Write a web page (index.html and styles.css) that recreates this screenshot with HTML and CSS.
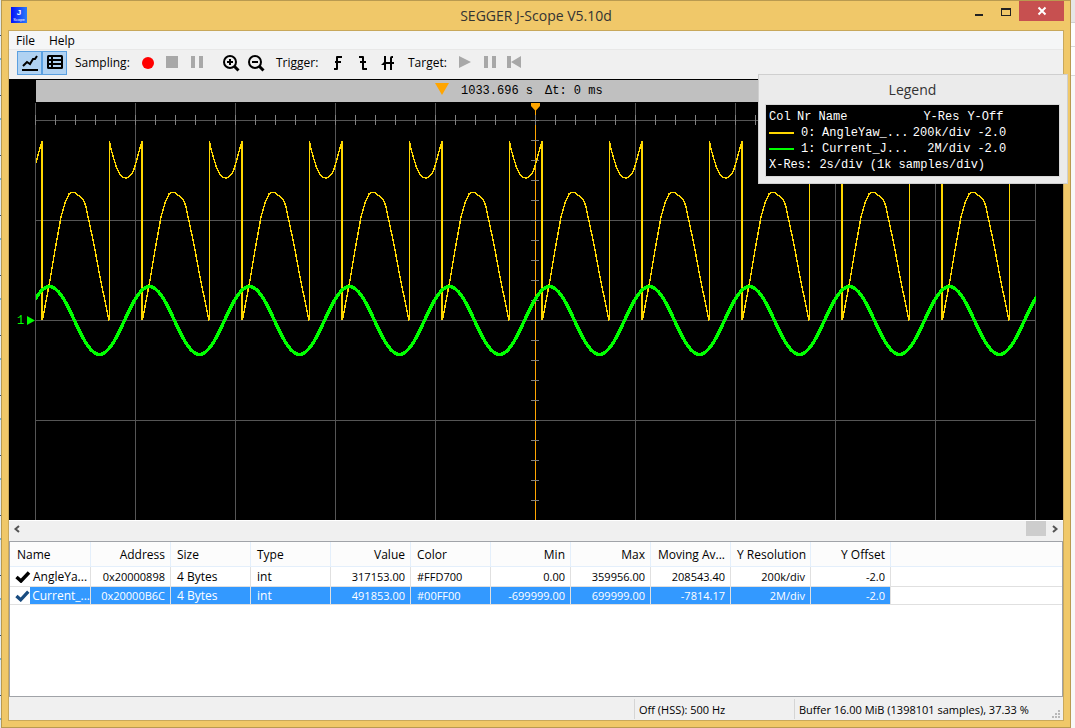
FILE: index.html
```html
<!DOCTYPE html>
<html lang="en">
<head>
<meta charset="utf-8">
<title>SEGGER J-Scope V5.10d</title>
<link rel="stylesheet" href="styles.css">
</head>
<body>
<div class="window">
  <header class="titlebar">
    <svg class="app-icon" width="16" height="16" viewBox="0 0 16 16" aria-hidden="true">
      <defs><linearGradient id="blue"><stop offset="0" stop-color="#0410f8"/><stop offset="1" stop-color="#2d7cf8"/></linearGradient></defs>
      <rect width="16" height="16" fill="url(#blue)"/>
      <text x="8" y="8" class="app-letter">J</text>
      <text x="8" y="14" class="app-word">Scope</text>
    </svg>
    <h1 class="title">SEGGER J-Scope V5.10d</h1>
    <div class="window-buttons">
      <button class="wbtn" aria-label="Minimize"><svg width="10" height="12" viewBox="0 0 10 12"><path fill="#222" d="M1 8h8v2H1z"/></svg></button>
      <button class="wbtn" aria-label="Maximize"><svg width="10" height="12" viewBox="0 0 10 12" shape-rendering="crispEdges"><path fill="#222" fill-rule="evenodd" d="M0 2h10v8H0zM1 4v5h8V4z"/></svg></button>
      <button class="wbtn close" aria-label="Close"><svg width="10" height="10" viewBox="0 0 10 10"><path stroke="#fff" stroke-width="2" d="M1.500 1.500l7 7M8.500 1.500l-7 7"/></svg></button>
    </div>
  </header>

  <div class="client">
    <nav class="menu"><button>File</button><button>Help</button></nav>

    <div class="toolbar">
      <button class="tool on" aria-label="Show graph" aria-pressed="true"><svg width="24" height="22" viewBox="0 0 24 22"><path d="M5 14l4-4 3 2 3-5 2 0 2-3" fill="none" stroke="#000" stroke-width="2"/><path d="M4 17h16v2H4z"/></svg></button>
      <button class="tool on" aria-label="Show table" aria-pressed="true"><svg width="24" height="22" viewBox="0 0 24 22"><rect x="4" y="3" width="16" height="14" rx="1.500"/><path fill="#b0d2f2" d="M6 5h2v2H6zM10 5h8v2h-8zM6 9h2v2H6zM10 9h8v2h-8zM6 13h2v2H6zM10 13h8v2h-8z"/></svg></button>
      <span class="label sampling">Sampling:</span>
      <button class="tool" aria-label="Record"><svg width="24" height="22" viewBox="0 0 24 22"><circle cx="12" cy="11" r="6" fill="red"/></svg></button>
      <button class="tool" aria-label="Stop"><svg width="24" height="22" viewBox="0 0 24 22"><path fill="#a8a8a8" d="M5 4h12v12H5z"/></svg></button>
      <button class="tool" aria-label="Pause"><svg width="24" height="22" viewBox="0 0 24 22"><path fill="#a8a8a8" d="M5 4h4v12H5zM13 4h4v12h-4z"/></svg></button>
      <button class="tool zoom" aria-label="Zoom in"><svg width="24" height="22" viewBox="0 0 24 22"><circle cx="11" cy="10" r="6" fill="none" stroke="#000" stroke-width="2"/><path d="M8 9h2V7h2v2h2v2h-2v2h-2v-2H8z"/><path d="M15 14l4.500 4.500" stroke="#000" stroke-width="3"/></svg></button>
      <button class="tool" aria-label="Zoom out"><svg width="24" height="22" viewBox="0 0 24 22"><circle cx="11" cy="10" r="6" fill="none" stroke="#000" stroke-width="2"/><path d="M8 9h6v2H8z"/><path d="M15 14l4.500 4.500" stroke="#000" stroke-width="3"/></svg></button>
      <span class="label trigger">Trigger:</span>
      <button class="tool" aria-label="Rising edge"><svg width="24" height="22" viewBox="0 0 24 22"><path d="M8 16h2v-5H9V9h1V5q0-1 1-1h5v2h-4v3h3v2h-3v6q0 1-1 1H8z"/></svg></button>
      <button class="tool" aria-label="Falling edge"><svg width="24" height="22" viewBox="0 0 24 22"><path d="M8 4h4q1 0 1 1v4h2v2h-2v5h3v2h-4q-1 0-1-1v-6H9V9h2V6H8z"/></svg></button>
      <button class="tool" aria-label="Both edges"><svg width="24" height="22" viewBox="0 0 24 22"><path d="M8 4h2v6h4V6q0-2 2-2h1v2h-1v4h2v2h-2v6h-2v-6h-4v6H8v-5H5l3-3z"/></svg></button>
      <span class="label target">Target:</span>
      <button class="tool" aria-label="Run target"><svg width="24" height="22" viewBox="0 0 24 22"><path fill="#a8a8a8" d="M6 4l12 6-12 6z"/></svg></button>
      <button class="tool" aria-label="Halt target"><svg width="24" height="22" viewBox="0 0 24 22"><path fill="#a8a8a8" d="M6 4h4v12H6zM14 4h4v12h-4z"/></svg></button>
      <button class="tool" aria-label="Reset target"><svg width="24" height="22" viewBox="0 0 24 22"><path fill="#a8a8a8" d="M4 4h4v12H4zM18 4v12l-10-6z"/></svg></button>
    </div>

    <main class="scope">
      <div class="ruler">
        <svg width="14" height="12" viewBox="0 0 14 12" aria-hidden="true"><path fill="#ffa500" d="M0 0h14L7 12z"/></svg>
        <span class="time">1033.696 s</span>
        <span>Δt: 0 ms</span>
      </div>
      <svg class="plot" viewBox="9 102 1054 418" preserveAspectRatio="none" role="img" aria-label="Signal plot">
        <defs>
          <clipPath id="area"><rect x="36" y="102" width="1000" height="418"/></clipPath>
          <pattern id="columns" x="35" y="103" width="100" height="420" patternUnits="userSpaceOnUse"><rect width="1" height="420" fill="#555"/></pattern>
          <pattern id="rows" x="35" y="120" width="1001" height="100" patternUnits="userSpaceOnUse"><rect width="1001" height="1" fill="#555"/></pattern>
          <pattern id="xticks" x="35" y="115" width="20" height="10" patternUnits="userSpaceOnUse"><rect width="1" height="10" fill="#808080"/></pattern>
          <pattern id="yticks" x="531" y="120" width="8" height="20" patternUnits="userSpaceOnUse"><rect width="8" height="1" fill="#808080"/></pattern>
          <g id="wave">
            <path d="M42.500 320L50 280 55 250 61 217 65 203 69 194 71.500 192.500H74.500L77.500 195 80 196.500 83.500 200 86 206.500 88.500 219 93.500 242 100 277 109 320.500M109.500 142L111.500 151 116 166 119.500 174 122.500 177.500 127 178 131.500 174.500 134.500 168 137.500 157 140 148 142 142" fill="none" stroke="#ffd700" stroke-width="1.400"/>
            <path d="M109 141h1v179h-1z" fill="#ffd700"/>
          </g>
          <g id="yaw">
            <use href="#wave"/>
            <path d="M41 141h2v179h-2z" fill="#ffd700"/>
          </g>
          <path id="current" fill="none" stroke="#00ff00" stroke-width="3.400" d="M24.500 320.500c8-17.500 16-34 25-34s17 16.500 25 34 16 34 25 34 17-16.500 25-34"/>
        </defs>
        <g shape-rendering="crispEdges">
          <rect x="35" y="103" width="1001" height="417" fill="url(#columns)"/>
          <rect x="35" y="120" width="1001" height="400" fill="url(#rows)"/>
          <path fill="#ffa500" d="M535 103h1v417h-1z"/>
          <rect x="35" y="115" width="1001" height="10" fill="url(#xticks)"/>
          <rect x="531" y="120" width="8" height="400" fill="url(#yticks)"/>
          <g clip-path="url(#area)">
            <use href="#wave" x="-100"/><use href="#yaw"/><use href="#yaw" x="100"/><use href="#yaw" x="200"/><use href="#yaw" x="300"/><use href="#yaw" x="400"/><use href="#yaw" x="500"/><use href="#yaw" x="600"/><use href="#yaw" x="700"/><use href="#yaw" x="800"/><use href="#yaw" x="900"/>
            <use href="#current"/><use href="#current" x="100"/><use href="#current" x="200"/><use href="#current" x="300"/><use href="#current" x="400"/><use href="#current" x="500"/><use href="#current" x="600"/><use href="#current" x="700"/><use href="#current" x="800"/><use href="#current" x="900"/><use href="#current" x="1000"/>
          </g>
        </g>
        <path fill="#ffa500" d="M531 103h9v3l-4.500 5-4.500-5z"/>
        <text class="channel" x="17" y="324">1</text>
        <path fill="#00ff00" d="M27 316l8 4.500-8 4.500z"/>
      </svg>
    </main>

    <div class="scrollbar">
      <button aria-label="Scroll left"><svg width="8" height="8" viewBox="0 0 8 8"><path d="M6 1L2.500 4 6 7" fill="none" stroke="#555" stroke-width="2"/></svg></button>
      <div class="track"><div class="thumb"></div></div>
      <button aria-label="Scroll right"><svg width="8" height="8" viewBox="0 0 8 8"><path d="M2 1l3.500 3L2 7" fill="none" stroke="#555" stroke-width="2"/></svg></button>
    </div>

    <section class="list">
      <table class="symbols">
        <thead>
          <tr><th>Name</th><th class="num">Address</th><th>Size</th><th>Type</th><th class="num">Value</th><th>Color</th><th class="num">Min</th><th class="num">Max</th><th class="num">Moving Av...</th><th class="num">Y Resolution</th><th class="num">Y Offset</th><th class="rest"></th></tr>
        </thead>
        <tbody>
          <tr><td class="name"><div class="sym"><svg width="16" height="12" viewBox="0 0 16 12"><path d="M1.500 6l4.500 4L14 1.500" fill="none" stroke="#000" stroke-width="3.500"/></svg><span>AngleYa...</span></div></td><td class="num">0x20000898</td><td>4 Bytes</td><td>int</td><td class="num">317153.00</td><td class="hex">#FFD700</td><td class="num">0.00</td><td class="num">359956.00</td><td class="num">208543.40</td><td class="num">200k/div</td><td class="num">-2.0</td><td class="rest"></td></tr>
          <tr class="selected"><td class="name"><div class="sym"><svg width="16" height="12" viewBox="0 0 16 12"><path d="M1.500 6l4.500 4L14 1.500" fill="none" stroke="#194c80" stroke-width="3.500"/></svg><span>Current_...</span></div></td><td class="num">0x20000B6C</td><td>4 Bytes</td><td>int</td><td class="num">491853.00</td><td class="hex">#00FF00</td><td class="num">-699999.00</td><td class="num">699999.00</td><td class="num">-7814.17</td><td class="num">2M/div</td><td class="num">-2.0</td><td class="rest"></td></tr>
        </tbody>
      </table>
    </section>

    <footer class="status">
      <span class="rate">Off (HSS): 500 Hz</span>
      <span class="buffer">Buffer 16.00 MiB (1398101 samples), 37.33 %</span>
      <svg class="grip" width="8" height="8" viewBox="0 0 8 8" aria-hidden="true"><path fill="#b8b8b8" d="M6 0h2v2H6zM3 3h2v2H3zM6 3h2v2H6zM0 6h2v2H0zM3 6h2v2H3zM6 6h2v2H6z"/></svg>
    </footer>
  </div>

  <aside class="legend">
    <h2>Legend</h2>
    <div class="legend-body">
      <table>
        <tr><th>Col</th><th colspan="2">Nr Name</th><th class="num head">Y-Res</th><th class="off">Y-Off</th></tr>
        <tr><td><i class="swatch gold"></i></td><td class="nr">0:</td><td>AngleYaw_...</td><td class="num">200k/div</td><td>-2.0</td></tr>
        <tr><td><i class="swatch green"></i></td><td class="nr">1:</td><td>Current_J...</td><td class="num">2M/div</td><td>-2.0</td></tr>
        <tr><td colspan="5">X-Res: 2s/div (1k samples/div)</td></tr>
      </table>
    </div>
  </aside>
</div>
</body>
</html>
```
FILE: styles.css
```css
* { box-sizing: border-box; }

body {
  margin: 0;
  height: 100vh;
  padding: 0 4px 0 1px;
  font: 12px/16px "Open Sans", "Noto Sans", sans-serif;
  color: #000;
  background:
    linear-gradient(#e6e6e6 22px, #d0d0d0 22px, #d0d0d0 23px, #fdfdfd 23px, #fdfdfd 46px, #d8d8d8 46px, #d8d8d8 47px, #fdfdfd 47px, #fdfdfd 75px, #d8d8d8 75px, #d8d8d8 76px, transparent 76px) right / 4px 100% no-repeat,
    repeating-linear-gradient(#dfe8ee 0, #dfe8ee 35px, #385070 35px, #385070 36px, #e8eef2 36px, #e8eef2 58px, #70b0e0 58px, #70b0e0 60px) left / 1px 100% no-repeat,
    #f8f8f8;
}

button {
  margin: 0;
  padding: 0;
  border: 0;
  background: none;
  font: inherit;
  color: inherit;
}

svg { display: block; }

.window {
  position: relative;
  display: flex;
  flex-direction: column;
  height: 100%;
  border: 1px solid #b99a50;
  padding: 0 6px 6px;
  background: #f0c869;
}

/* Title bar */
.titlebar {
  display: grid;
  grid-template-columns: 140px 1fr 140px;
  height: 29px;
  flex: none;
}
.app-icon { margin: 6px 0 0 3px; overflow: visible; }
.app-letter { font: bold 8px "Liberation Sans", sans-serif; fill: #fff; text-anchor: middle; }
.app-word { font: 4px "Liberation Sans", sans-serif; fill: #fff; text-anchor: middle; }
.title {
  margin: 0;
  text-align: center;
  font-size: 14px;
  line-height: 29px;
  font-weight: 400;
  color: #333;
}
.window-buttons { display: flex; justify-content: flex-end; align-items: flex-start; }
.wbtn { display: grid; place-items: center; width: 27px; height: 22px; }
.wbtn.close { width: 45px; height: 20px; background: #c75050; }

/* Client area */
.client {
  flex: 1;
  min-height: 0;
  display: flex;
  flex-direction: column;
  border: 1px solid #c8a85c;
  background: #f0f0f0;
}

.menu {
  display: flex;
  gap: 14px;
  height: 19px;
  padding: 2px 0 0 7px;
  background: #f5f6f7;
  border-bottom: 1px solid #e8e8e8;
}

.toolbar {
  display: flex;
  align-items: center;
  height: 29px;
  padding: 0 8px 4px;
}
.tool { display: grid; place-items: center; width: 25px; height: 24px; }
.tool.on { background: #b0d2f2; border: 1px solid #5ba0e0; }
.tool.zoom { margin-left: 8px; }
.label { margin-left: 8px; }
.sampling { width: 60px; }
.trigger { width: 49px; }
.target { width: 44px; }

/* Scope */
.scope {
  flex: 1;
  min-height: 0;
  display: flex;
  flex-direction: column;
  padding-top: 1px;
  background: #000;
}
.ruler {
  display: flex;
  align-items: center;
  gap: 12px;
  height: 22px;
  flex: none;
  margin-left: 27px;
  padding-left: 399px;
  background: #c0c0c0;
  font: 12px/16px "Liberation Mono", monospace;
}
.ruler svg { margin-bottom: 4px; }
.plot { flex: 1; min-height: 0; width: 100%; }
.channel { font: 12px "Liberation Mono", monospace; fill: #00ff00; }

.scrollbar {
  display: flex;
  height: 21px;
  padding-bottom: 5px;
  border-top: 1px solid #fff;
}
.scrollbar button { display: grid; place-items: center; width: 16px; }
.track { flex: 1; display: flex; justify-content: flex-end; padding-right: 1px; }
.thumb { width: 20px; background: #cdcdcd; }

/* Symbol list */
.list {
  height: 156px;
  border: 1px solid #a0a3a8;
  background: #fff;
}
.symbols {
  width: 100%;
  table-layout: fixed;
  border-collapse: separate;
  border-spacing: 0;
}
.symbols th, .symbols td {
  width: 80px;
  padding: 0 5px 0 6px;
  border-right: 1px solid #e0e0e0;
  border-bottom: 1px solid #e0e0e0;
  text-align: left;
  font-weight: 400;
  white-space: nowrap;
}
.symbols th { height: 25px; padding-top: 2px; border-color: #e4effb; background: #fcfcfc; }
.symbols td { height: 18px; line-height: 17px; }
.symbols tbody tr:first-child td { height: 20px; }
.symbols .num { text-align: right; }
.symbols td.num, .symbols td.hex { font-size: 11px; }
.symbols .rest { width: auto; border-right: 0; }
.symbols .name { padding-left: 0; padding-right: 0; }
.symbols tr:first-child > :first-child { width: 81px; }
.symbols th:first-child { padding-left: 7px; }
.sym { display: flex; align-items: center; padding-left: 5px; }
.sym span { flex: 1; padding-left: 2px; }
.selected td { background: #3399ff; color: #fff; }
.selected .name, .selected .rest { background: #fff; }
.selected .sym span { background: #3399ff; }

/* Status bar */
.status {
  display: flex;
  justify-content: flex-end;
  align-items: center;
  height: 23px;
  padding-right: 3px;
  font-size: 11px;
}
.status span { height: 20px; padding: 1px 0 0 4px; line-height: 20px; border-left: 1px solid #d5d5d5; }
.rate { width: 160px; }
.buffer { width: 258px; }
.grip { align-self: flex-end; margin-bottom: 2px; }

/* Legend overlay */
.legend {
  position: absolute;
  top: 73px;
  right: 2px;
  width: 310px;
  padding: 0 7px 6px 6px;
  border: 1px solid #cfcfcf;
  background: #ebebeb;
}
.legend h2 {
  margin: 0;
  font-size: 14px;
  line-height: 29px;
  font-weight: 400;
  text-align: center;
  color: #333;
}
.legend-body {
  padding: 4px 3px 3px;
  border: 1px solid #d8d8d8;
  background: #000;
  color: #fff;
  font: 12px/16px "Liberation Mono", monospace;
}
.legend table { border-collapse: collapse; }
.legend th, .legend td { padding: 0; text-align: left; font-weight: 400; white-space: nowrap; }
.legend th:first-child { width: 28px; }
.legend .nr { width: 25px; padding-left: 4px; }
.legend .num { width: 69px; padding-right: 7px; text-align: right; }
.legend .head { padding-right: 18px; }
.legend .off { text-indent: -10px; }
.swatch { display: block; width: 25px; height: 2px; }
.gold { background: #ffd700; }
.green { background: #00ff00; }
```
